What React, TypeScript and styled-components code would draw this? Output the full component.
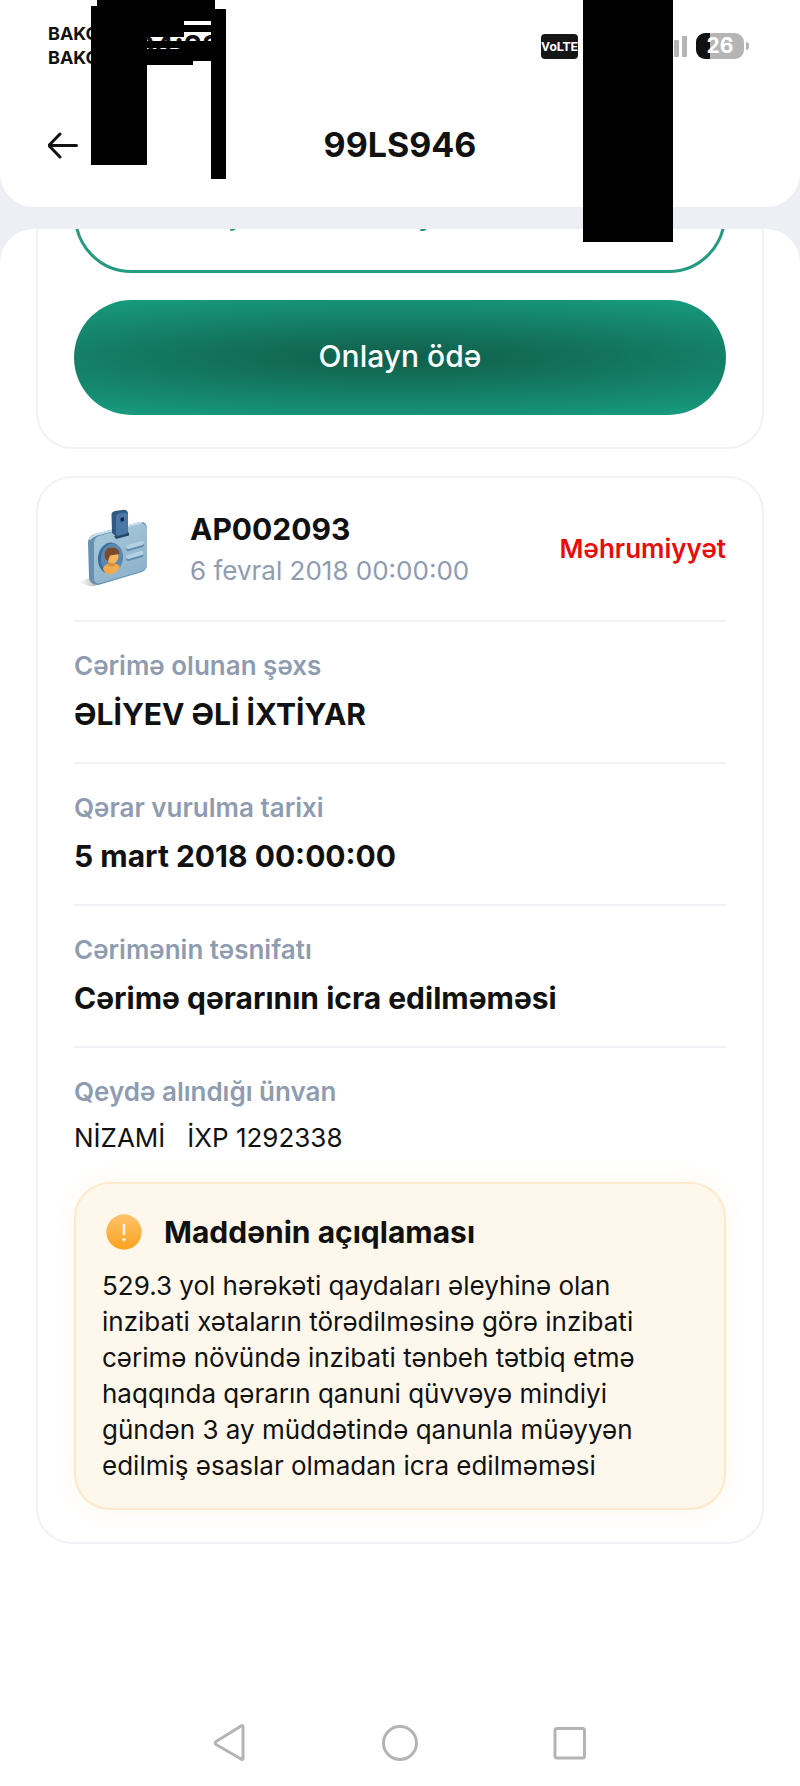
import React from 'react';
import styled, { createGlobalStyle } from 'styled-components';

const ink = '#111111';
const muted = '#8f9cb0';
const line = '#f1f2f6';
const green = '#17977b';

const GlobalStyle = createGlobalStyle`
  * { box-sizing: border-box; }
  body {
    margin: 0;
    background: #ffffff;
    color: ${ink};
    font-family: Inter, "Noto Sans", sans-serif;
  }
  button { font-family: inherit; cursor: pointer; }
  h1, h2, p, dl, dt, dd { margin: 0; }
`;

const Screen = styled.div`
  position: relative;
  display: flex;
  flex-direction: column;
  min-height: 100vh;
  background: #edeff5;
`;

const Header = styled.header`
  display: flex;
  flex-direction: column;
  gap: 10px;
  padding: 20px 48px 0;
  border-radius: 0 0 34px 34px;
  background: #ffffff;
`;

const StatusBar = styled.div`
  display: flex;
  align-items: center;
  justify-content: space-between;
  height: 52px;
`;

const StatusGroup = styled.div<{ $gap: number }>`
  display: flex;
  align-items: center;
  gap: ${(p) => p.$gap}px;
`;

const Carriers = styled.div`
  width: 58px;
  font-size: 18px;
  line-height: 24px;
  font-weight: 700;
`;

const Clock = styled.time`
  font-size: 29px;
  line-height: 32px;
  font-weight: 700;
`;

const VolteBadge = styled.span`
  width: 37px;
  margin-right: 88px;
  border-radius: 4px;
  background: #161616;
  color: #ffffff;
  font-family: Roboto, sans-serif;
  font-size: 13px;
  line-height: 25px;
  font-weight: 700;
  text-align: center;
`;

const Signal = styled.svg`
  width: 14px;
  height: 22px;
  fill: #b5b5b5;
`;

const Battery = styled.span`
  position: relative;
  width: 48px;
  margin-right: 8px;
  border-radius: 9px;
  background: linear-gradient(90deg, #111111 30%, #b5b5b5 30%);
  color: #ffffff;
  font-size: 21px;
  line-height: 26px;
  font-weight: 700;
  text-align: center;

  &::after {
    content: '';
    position: absolute;
    left: 50px;
    top: 9px;
    width: 3px;
    height: 8px;
    border-radius: 0 4px 4px 0;
    background: #b5b5b5;
  }
`;

const TitleBar = styled.div`
  display: grid;
  grid-template-columns: 32px 1fr 32px;
  align-items: center;
  height: 125px;
`;

const IconButton = styled.button`
  display: flex;
  align-items: center;
  justify-content: center;
  padding: 0;
  border: 0;
  background: none;
  color: inherit;
`;

const PageTitle = styled.h1`
  font-size: 34px;
  line-height: 44px;
  font-weight: 700;
  text-align: center;
`;

const Sheet = styled.main`
  display: flex;
  flex: 1;
  flex-direction: column;
  gap: 27px;
  margin-top: 22px;
  padding: 0 36px;
  overflow: hidden;
  border-radius: 34px 34px 0 0;
  background: #ffffff;
`;

const Card = styled.section`
  padding: 0 36px 32px;
  border: 2px solid ${line};
  border-radius: 36px;
`;

/* The list is scrolled, so the first card starts above the sheet's edge. */
const ActionsCard = styled(Card)`
  display: flex;
  flex-direction: column;
  gap: 27px;
  margin-top: -105px;
  padding-top: 32px;
`;

const PillButton = styled.button<{ $filled?: boolean }>`
  height: 115px;
  padding-bottom: 4px;
  border: ${(p) => (p.$filled ? '0' : '3px solid #259a80')};
  border-radius: 58px;
  background: ${(p) =>
    p.$filled
      ? 'radial-gradient(ellipse 82% 54% at 50% 50%, #105f4b 0%, #13745d 40%, #17977b 100%)'
      : '#ffffff'};
  color: ${(p) => (p.$filled ? '#ffffff' : green)};
  font-size: 30px;
  font-weight: 500;
`;

const FineHeader = styled.header`
  display: flex;
  align-items: center;
  gap: 28px;
  height: 144px;
  border-bottom: 2px solid ${line};
`;

const FineHeading = styled.div`
  display: flex;
  flex: 1;
  flex-direction: column;
  gap: 8px;
`;

const Strong = styled.h2`
  font-size: 30px;
  line-height: 36px;
  font-weight: 700;
`;

const FineDate = styled.p`
  color: ${muted};
  font-size: 26px;
  line-height: 32px;
`;

const Status = styled.p`
  color: #e80c0c;
  font-size: 26px;
  line-height: 32px;
  font-weight: 600;
`;

const Field = styled.div`
  display: flex;
  flex-direction: column;
  gap: 14px;
  padding: 28px 0 30px;
  border-bottom: 2px solid ${line};

  &:last-child {
    padding-bottom: 28px;
    border-bottom: 0;
  }
`;

const FieldLabel = styled.dt`
  color: ${muted};
  font-size: 26px;
  line-height: 32px;
  font-weight: 600;
`;

const FieldValue = styled.dd<{ $plain?: boolean }>`
  font-size: ${(p) => (p.$plain ? 26 : 30)}px;
  line-height: ${(p) => (p.$plain ? 32 : 36)}px;
  font-weight: ${(p) => (p.$plain ? 400 : 700)};
  white-space: pre-wrap;
`;

const Notice = styled.aside`
  display: flex;
  flex-direction: column;
  gap: 18px;
  padding: 30px 26px 24px;
  border: 2px solid #fde9cb;
  border-radius: 36px;
  background: #fef8ec;
  box-shadow: 0 0 26px rgba(253, 190, 90, 0.1);
`;

const NoticeHead = styled.div`
  display: flex;
  align-items: center;
  gap: 22px;
  padding-left: 4px;
`;

const NoticeText = styled.p`
  max-width: 570px;
  font-size: 26px;
  line-height: 36px;
`;

const NavBar = styled.nav`
  display: flex;
  justify-content: center;
  gap: 130px;
  height: 86px;
  background: #ffffff;
`;

const Mask = styled.div<{ $x: number; $y: number; $w: number; $h: number }>`
  position: absolute;
  left: ${(p) => p.$x}px;
  top: ${(p) => p.$y}px;
  width: ${(p) => p.$w}px;
  height: ${(p) => p.$h}px;
  background: #000000;
`;

const masks = [
  [91, 6, 56, 159],
  [97, 0, 87, 37],
  [184, 0, 31, 21],
  [184, 25, 27, 7],
  [147, 41, 64, 7],
  [147, 49, 64, 12],
  [180, 41, 31, 20],
  [147, 61, 46, 4],
  [211, 9, 15, 170],
  [583, 0, 90, 242],
];

const fields = [
  { label: 'Cərimə olunan şəxs', value: 'ƏLİYEV ƏLİ İXTİYAR' },
  { label: 'Qərar vurulma tarixi', value: '5 mart 2018 00:00:00' },
  { label: 'Cərimənin təsnifatı', value: 'Cərimə qərarının icra edilməməsi' },
  { label: 'Qeydə alındığı ünvan', value: 'NİZAMİ   İXP 1292338', plain: true },
];

function BadgeIcon() {
  return (
    <svg width="88" height="88" viewBox="0 0 88 88" aria-hidden="true">
      <defs>
        <linearGradient id="face" x1="0" y1="0" x2="0.5" y2="1">
          <stop offset="0" stopColor="#a9cadd" />
          <stop offset="1" stopColor="#8eb3ca" />
        </linearGradient>
        <linearGradient id="shade" x1="0" y1="0" x2="1" y2="0">
          <stop offset="0" stopColor="#bbbbbb" stopOpacity="0" />
          <stop offset="1" stopColor="#999999" stopOpacity="0.7" />
        </linearGradient>
      </defs>
      <path d="M4 77l12-4 6 8q-8 1-18-4z" fill="url(#shade)" />
      <path d="M21 29L66 17Q73 16 73 24V60Q73 65 68 67L26 79.500Q21 81 18 78 15 76 15 72L14 38Q14 31 21 29z" fill="#6690ad" />
      <path d="M25 31L67 18.500Q73 18 73 25V59Q73 64 68 66L27 78Q20 80 20 73V38Q20 33 25 31z" fill="url(#face)" />
      <path d="M16 34Q18 31 23 29.500L67 17.800" fill="none" stroke="#c9e0ec" strokeWidth="2" strokeLinecap="round" />
      <path d="M40 31L55 27.500V30.500L42 34z" fill="#244566" />
      <path d="M37.500 10Q37 7 41 6L48 5Q53 4 54 8V28L43 32 38 28z" fill="#31587f" />
      <path d="M42 12Q42 9 45 8.500L50 7.500Q54 7 54 10V26Q54 28 51 29L45 30.500Q42 31 42 28z" fill="#4a78a6" />
      <path d="M46.500 13L50 12.200V16L46.500 16.800z" fill="#14263f" />
      <ellipse cx="36" cy="53" rx="12" ry="15.500" fill="#3c6d9c" transform="rotate(8 36 53)" />
      <ellipse cx="38" cy="53" rx="11" ry="14.500" fill="#5c88b0" transform="rotate(8 38 53)" />
      <path d="M29 64Q30 59 36 58.500H40Q45 59 46 62 42 69 36 69.500 31 69 29 64z" fill="#f2ab4c" />
      <path d="M34 53H41V60Q37 63 34 60z" fill="#dc8c36" />
      <ellipse cx="38.500" cy="51" rx="6" ry="7.500" fill="#f5b55f" />
      <path d="M31 53Q29 43 37 42.500 45 42 45.500 49L36 50.500 34 56Q32 56 31 53z" fill="#7b4a2c" />
      <g strokeLinecap="round" strokeWidth="4">
        <path d="M54 44L68 40M54 54L67.500 50" stroke="#5e8cae" />
        <path d="M54 42L68 38M54 52L67.500 48" stroke="#b5d1e1" />
      </g>
    </svg>
  );
}

function WarningIcon() {
  return (
    <svg width="36" height="36" viewBox="0 0 36 36" aria-hidden="true">
      <defs>
        <linearGradient id="amber" x1="0" y1="0" x2="0" y2="1">
          <stop offset="0" stopColor="#fdc26b" />
          <stop offset="1" stopColor="#fda31f" />
        </linearGradient>
      </defs>
      <circle cx="18" cy="18" r="17.7" fill="url(#amber)" />
      <path d="M18 11v9" stroke="#fff6e4" strokeWidth="2.6" strokeLinecap="round" />
      <circle cx="18" cy="25.6" r="1.7" fill="#fff6e4" />
    </svg>
  );
}

export default function App() {
  return (
    <>
      <GlobalStyle />
      <Screen>
        <Header>
          <StatusBar>
            <StatusGroup $gap={29}>
              <Carriers>
                <div>BAKC</div>
                <div>BAKC</div>
              </Carriers>
              <Clock>04:23</Clock>
            </StatusGroup>
            <StatusGroup $gap={8}>
              <VolteBadge>VoLTE</VolteBadge>
              <Signal viewBox="0 0 14 22" aria-hidden="true">
                <rect x="0" y="5" width="5" height="17" rx="1" />
                <rect x="8" y="1" width="5" height="21" rx="1" />
              </Signal>
              <Battery>26</Battery>
            </StatusGroup>
          </StatusBar>
          <TitleBar>
            <IconButton type="button" aria-label="Geri">
              <svg width="32" height="32" viewBox="0 0 32 32" fill="none" stroke="currentColor" strokeWidth="3" strokeLinecap="round" strokeLinejoin="round">
                <path d="M28.500 16.500H1M12 5L0.800 16.500 12 28" />
              </svg>
            </IconButton>
            <PageTitle>99LS946</PageTitle>
          </TitleBar>
        </Header>

        <Sheet>
          <ActionsCard>
            <PillButton type="button">Fotoşəkil və videoya buradan bax</PillButton>
            <PillButton type="button" $filled>
              Onlayn ödə
            </PillButton>
          </ActionsCard>

          <Card>
            <FineHeader>
              <BadgeIcon />
              <FineHeading>
                <Strong>AP002093</Strong>
                <FineDate>6 fevral 2018 00:00:00</FineDate>
              </FineHeading>
              <Status>Məhrumiyyət</Status>
            </FineHeader>
            <dl>
              {fields.map((f) => (
                <Field key={f.label}>
                  <FieldLabel>{f.label}</FieldLabel>
                  <FieldValue $plain={f.plain}>{f.value}</FieldValue>
                </Field>
              ))}
            </dl>
            <Notice>
              <NoticeHead>
                <WarningIcon />
                <Strong>Maddənin açıqlaması</Strong>
              </NoticeHead>
              <NoticeText>
                529.3 yol hərəkəti qaydaları əleyhinə olan inzibati xətaların törədilməsinə görə inzibati
                cərimə növündə inzibati tənbeh tətbiq etmə haqqında qərarın qanuni qüvvəyə mindiyi
                gündən 3 ay müddətində qanunla müəyyən edilmiş əsaslar olmadan icra edilməməsi
              </NoticeText>
            </Notice>
          </Card>
        </Sheet>

        <NavBar aria-label="Sistem">
          <IconButton type="button" aria-label="Geri">
            <svg width="40" height="40" viewBox="0 0 40 40" fill="none" stroke="#b4b4b4" strokeWidth="3" strokeLinejoin="round">
              <path d="M33 3.500V35.500Q33 37 31.500 36.300L6 21.500Q4.500 20 6 18.500L31.500 2.700Q33 2 33 3.500z" />
            </svg>
          </IconButton>
          <IconButton type="button" aria-label="Ana ekran">
            <svg width="40" height="40" viewBox="0 0 40 40" fill="none" stroke="#b4b4b4" strokeWidth="3">
              <circle cx="20" cy="20" r="16.500" />
            </svg>
          </IconButton>
          <IconButton type="button" aria-label="Son tətbiqlər">
            <svg width="40" height="40" viewBox="0 0 40 40" fill="none" stroke="#b4b4b4" strokeWidth="3">
              <rect x="5" y="5.500" width="29.500" height="29.500" rx="2" />
            </svg>
          </IconButton>
        </NavBar>

        {masks.map(([x, y, w, h]) => (
          <Mask key={`${x}-${y}`} $x={x} $y={y} $w={w} $h={h} />
        ))}
      </Screen>
    </>
  );
}
